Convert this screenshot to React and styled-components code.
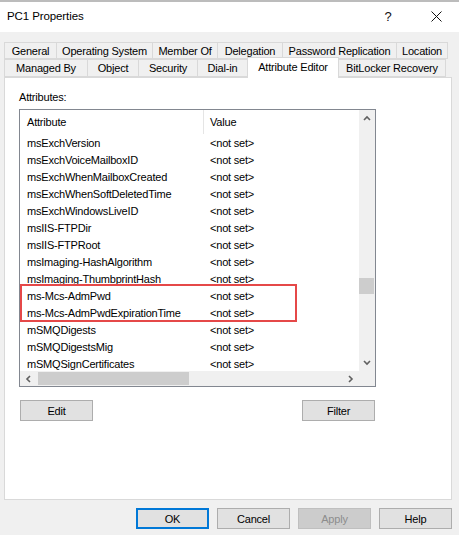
import React from "react";
import styled, { createGlobalStyle } from "styled-components";

const Global = createGlobalStyle`
  html, body { margin: 0; padding: 0; background: #f0f0f0; }
  body { font-family: "Liberation Sans", Arial, sans-serif; font-size: 11px; letter-spacing: -0.2px; color: #000; }
  * { box-sizing: border-box; }
`;

const Window = styled.div`
  width: 459px;
  height: 535px;
  background: #f0f0f0;
  display: flex;
  flex-direction: column;
  overflow: hidden;
`;

const TitleBar = styled.div`
  height: 32px;
  flex: none;
  background: #fff;
  border-top: 2px solid #bcbcbc;
  display: flex;
  align-items: center;
  padding-left: 7px;
  padding-bottom: 2px;
`;

const Title = styled.div`
  flex: 1;
  font-size: 11.5px;
  letter-spacing: -0.1px;
`;

const Help = styled.div`
  width: 12px;
  font-size: 13px;
  margin-right: 36px;
  text-align: center;
  letter-spacing: 0;
  color: #111;
`;

const CloseBox = styled.div`
  width: 12px;
  margin-right: 17px;
  display: flex;
  align-items: center;
  justify-content: center;
`;

const Body = styled.div`
  flex: 1;
  display: flex;
  flex-direction: column;
  padding: 10px 7px 0 4px;
`;

const TabStrip = styled.div`
  display: flex;
  flex-direction: column;
  height: 35px;
`;

const TabRow = styled.div`
  display: flex;
  height: ${(p) => p.$h}px;
`;

const Tab = styled.div`
  width: ${(p) => p.$w}px;
  flex: none;
  height: ${(p) => (p.$active ? p.$h + 3 : p.$h)}px;
  margin-top: ${(p) => (p.$active ? -2 : 0)}px;
  margin-right: -1px;
  position: relative;
  z-index: ${(p) => (p.$active ? 2 : 1)};
  background: ${(p) => (p.$active ? "#fff" : "#f0f0f0")};
  border: 1px solid #d9d9d9;
  border-bottom: ${(p) => (p.$active ? "none" : "1px solid #d9d9d9")};
  display: flex;
  align-items: center;
  justify-content: center;
  padding-bottom: ${(p) => (p.$active ? 3 : 0)}px;
  white-space: nowrap;
`;

const Panel = styled.div`
  height: 423px;
  background: #fff;
  border: 1px solid #d9d9d9;
  padding: 12px 14px 0 14px;
  display: flex;
  flex-direction: column;
`;

const Label = styled.div`
  height: 14px;
  line-height: 14px;
`;

const ListBox = styled.div`
  margin-top: 5px;
  width: 357px;
  height: 278px;
  border: 1px solid #828790;
  display: grid;
  grid-template-columns: 339px 16px;
  grid-template-rows: 261px 15px;
`;

const ListView = styled.div`
  position: relative;
  overflow: hidden;
  background: #fff;
`;

const Header = styled.div`
  height: 24px;
  display: flex;
  align-items: center;
`;

const HeaderCell = styled.div`
  width: ${(p) => (p.$w ? p.$w + "px" : "auto")};
  flex: ${(p) => (p.$w ? "none" : 1)};
  height: 24px;
  line-height: 24px;
  padding-left: ${(p) => p.$pad}px;
  border-right: ${(p) => (p.$sep ? "1px solid #e5e5e5" : "none")};
`;

const Row = styled.div`
  height: 17px;
  display: flex;
  align-items: center;
  white-space: nowrap;
`;

const Cell = styled.div`
  width: ${(p) => (p.$w ? p.$w + "px" : "auto")};
  flex: ${(p) => (p.$w ? "none" : 1)};
  padding-left: ${(p) => p.$pad}px;
  overflow: hidden;
`;

const Highlight = styled.div`
  position: absolute;
  left: 0;
  top: 174px;
  width: 277px;
  height: 38px;
  border: 2px solid #e54848;
  pointer-events: none;
`;

const VScroll = styled.div`
  background: #f0f0f0;
  display: flex;
  flex-direction: column;
  align-items: center;
`;

const ArrowBox = styled.div`
  width: ${(p) => p.$w}px;
  height: ${(p) => p.$h}px;
  flex: none;
  display: flex;
  align-items: center;
  justify-content: center;
`;

const VTrack = styled.div`
  flex: 1;
  width: 100%;
  display: flex;
  flex-direction: column;
  align-items: center;
`;

const VThumb = styled.div`
  width: 15px;
  height: 16px;
  margin-left: -2px;
  background: #cdcdcd;
`;

const HScroll = styled.div`
  background: #f0f0f0;
  display: flex;
  align-items: center;
`;

const HThumb = styled.div`
  width: 151px;
  height: 13px;
  background: #cdcdcd;
`;

const HTrack = styled.div`
  flex: 1;
  height: 100%;
  display: flex;
  align-items: center;
`;

const Corner = styled.div`
  background: #f0f0f0;
`;

const ButtonRow = styled.div`
  margin-top: 13px;
  width: 355px;
  margin-left: 1px;
  display: flex;
  justify-content: space-between;
`;

const Button = styled.div`
  width: 73px;
  height: 21px;
  background: ${(p) => (p.$disabled ? "#cccccc" : "#e1e1e1")};
  border: ${(p) => (p.$default ? "2px solid #0078d7" : p.$disabled ? "1px solid #bfbfbf" : "1px solid #adadad")};
  color: ${(p) => (p.$disabled ? "#8c8c8c" : "#000")};
  display: flex;
  align-items: center;
  justify-content: center;
`;

const Footer = styled.div`
  margin-top: 8px;
  display: flex;
  justify-content: flex-end;
  gap: 8px;
`;

const Chevron = ({ dir }) => {
  const pts = {
    up: "1,5 4,2 7,5",
    down: "1,2 4,5 7,2",
    left: "5,1 2,4 5,7",
    right: "2,1 5,4 2,7",
  }[dir];
  return (
    <svg width="8" height="8" viewBox="0 0 8 8">
      <polyline points={pts} fill="none" stroke="#606060" strokeWidth="1.6" />
    </svg>
  );
};

const row1 = [
  ["General", 53],
  ["Operating System", 97],
  ["Member Of", 66],
  ["Delegation", 66],
  ["Password Replication", 115],
  ["Location", 52],
];
const row2 = [
  ["Managed By", 84],
  ["Object", 52],
  ["Security", 60],
  ["Dial-in", 51],
  ["Attribute Editor", 92, true],
  ["BitLocker Recovery", 108],
];

const attrs = [
  "msExchVersion",
  "msExchVoiceMailboxID",
  "msExchWhenMailboxCreated",
  "msExchWhenSoftDeletedTime",
  "msExchWindowsLiveID",
  "msIIS-FTPDir",
  "msIIS-FTPRoot",
  "msImaging-HashAlgorithm",
  "msImaging-ThumbprintHash",
  "ms-Mcs-AdmPwd",
  "ms-Mcs-AdmPwdExpirationTime",
  "mSMQDigests",
  "mSMQDigestsMig",
  "mSMQSignCertificates",
];

export default function App() {
  return (
    <Window>
      <Global />
      <TitleBar>
        <Title>PC1 Properties</Title>
        <Help>?</Help>
        <CloseBox>
          <svg width="11" height="11" viewBox="0 0 11 11">
            <path d="M0.5 0.5 L10.5 10.5 M10.5 0.5 L0.5 10.5" stroke="#111" strokeWidth="1" />
          </svg>
        </CloseBox>
      </TitleBar>
      <Body>
        <TabStrip>
          <TabRow $h={17}>
            {row1.map(([t, w]) => (
              <Tab key={t} $w={w} $h={17}>{t}</Tab>
            ))}
          </TabRow>
          <TabRow $h={18}>
            {row2.map(([t, w, a]) => (
              <Tab key={t} $w={w} $h={18} $active={a}>{t}</Tab>
            ))}
          </TabRow>
        </TabStrip>
        <Panel>
          <Label>Attributes:</Label>
          <ListBox>
            <ListView>
              <Header>
                <HeaderCell $w={184} $pad={7} $sep>Attribute</HeaderCell>
                <HeaderCell $pad={6}>Value</HeaderCell>
              </Header>
              {attrs.map((a) => (
                <Row key={a}>
                  <Cell $w={184} $pad={7}>{a}</Cell>
                  <Cell $pad={6}>&lt;not set&gt;</Cell>
                </Row>
              ))}
              <Highlight />
            </ListView>
            <VScroll>
              <ArrowBox $w={16} $h={17}><Chevron dir="up" /></ArrowBox>
              <VTrack>
                <VThumb style={{ marginTop: 151 }} />
              </VTrack>
              <ArrowBox $w={16} $h={17}><Chevron dir="down" /></ArrowBox>
            </VScroll>
            <HScroll>
              <ArrowBox $w={17} $h={15}><Chevron dir="left" /></ArrowBox>
              <HTrack>
                <HThumb style={{ marginLeft: 1 }} />
              </HTrack>
              <ArrowBox $w={17} $h={15}><Chevron dir="right" /></ArrowBox>
            </HScroll>
            <Corner />
          </ListBox>
          <ButtonRow>
            <Button>Edit</Button>
            <Button>Filter</Button>
          </ButtonRow>
        </Panel>
        <Footer>
          <Button $default>OK</Button>
          <Button>Cancel</Button>
          <Button $disabled>Apply</Button>
          <Button>Help</Button>
        </Footer>
      </Body>
    </Window>
  );
}
